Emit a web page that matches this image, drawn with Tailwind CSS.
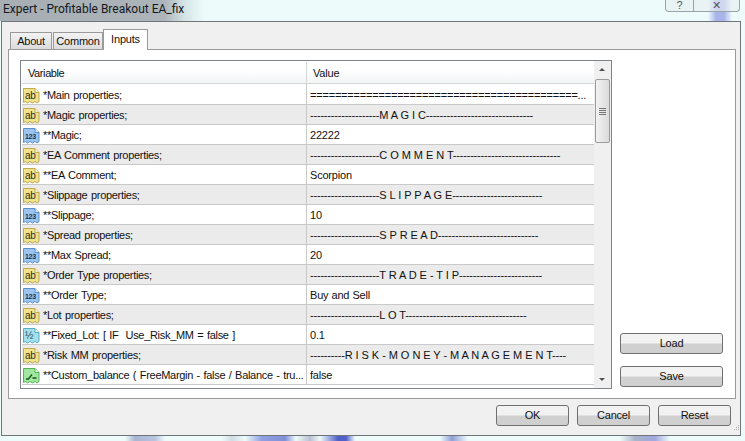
<!DOCTYPE html>
<html lang="en">
<head>
    <meta charset="UTF-8">
    <title>Expert - Profitable Breakout EA_fix</title>
    <script src="https://cdn.jsdelivr.net/npm/@tailwindcss/browser@4"></script>
</head>
<body class="relative w-[745px] h-[441px] overflow-hidden font-['Liberation_Sans',sans-serif] text-[11px] tracking-[-0.2px] text-[#111] bg-[linear-gradient(90deg,#eefbfb_0,#eefbfb_125px,#a8b4d0_135px,#b8c4e0_155px,#eefbfb_165px,#eefbfb_222px,#d0dce4_232px,#eefbfb_245px,#8f9fe0_262px,#8090d8_285px,#eefbfb_296px,#b8c0d0_310px,#eefbfb_320px,#5060c8_338px,#5060c8_346px,#eefbfb_355px,#eefbfb_440px,#8f9fd8_452px,#eefbfb_468px,#eefbfb_620px,#a8b4c8_635px,#a0a8e0_655px,#eefbfb_670px,#eefbfb_100%)]">
    <svg class="hidden">
        <symbol id="ab" viewBox="0 0 17 17">
            <path d="M0.5 1.5H12L16 5.5V14.5L14 16L12 14.5L9.5 16L7 14.5L4.5 16L2.5 14.5L0.5 15.5Z" fill="#f1e38c" stroke="#bda94e"/>
            <path d="M12 1.5V5.5H16" fill="#fff9d2" stroke="#bda94e"/>
            <text x="2" y="12" font-size="10" font-family="Liberation Sans" fill="#2b2a1c">ab</text>
        </symbol>
        <symbol id="num" viewBox="0 0 17 17">
            <path d="M0.5 1.5H12L16 5.5V14.5L14 16L12 14.5L9.5 16L7 14.5L4.5 16L2.5 14.5L0.5 15.5Z" fill="#9cc4ee" stroke="#5a8fc6"/>
            <path d="M12 1.5V5.5H16" fill="#e2f0fc" stroke="#5a8fc6"/>
            <text x="2" y="12" font-size="7" font-weight="700" font-family="Liberation Sans" fill="#12355e">123</text>
        </symbol>
        <symbol id="frac" viewBox="0 0 17 17">
            <path d="M0.5 1.5H12L16 5.5V14.5L14 16L12 14.5L9.5 16L7 14.5L4.5 16L2.5 14.5L0.5 15.5Z" fill="#a2e0ee" stroke="#58aebf"/>
            <path d="M12 1.5V5.5H16" fill="#e0f8fc" stroke="#58aebf"/>
            <text x="2" y="12" font-size="10" font-family="Liberation Sans" fill="#1c4f5c">½</text>
        </symbol>
        <symbol id="bool" viewBox="0 0 17 17">
            <path d="M0.5 1.5H12L16 5.5V14.5L14 16L12 14.5L9.5 16L7 14.5L4.5 16L2.5 14.5L0.5 15.5Z" fill="#a0e8a0" stroke="#56b152"/>
            <path d="M12 1.5V5.5H16" fill="#e2fbe0" stroke="#56b152"/>
            <path d="M3 12H5.5L9 7.5M9.5 11H13.5" fill="none" stroke="#14551a" stroke-width="1.3"/>
        </symbol>
    </svg>

    <div class="relative h-[21px] bg-[linear-gradient(90deg,#a6adb3_0,#aeb5ba_165px,#d5e6e8_185px,#eefbfb_205px,#eefbfb_708px,#a8b4e8_716px,#a8b4e8_724px,#eefbfb_732px,#eefbfb_100%)]">
        <div class="pl-[3px] pt-[1px] font-['Roboto',sans-serif] text-[12px] tracking-normal leading-[16px] text-[#14181c]">Expert - Profitable Breakout EA_fix</div>
        <div class="absolute right-[5px] top-0 flex h-[12px] w-[75px] rounded-b-[4px] border border-t-0 border-[#9aa3a8] bg-[#e8eef0]/60">
            <div class="flex w-[28px] items-end justify-center border-r border-[#9aa3a8] text-[11px] leading-[11px] text-[#555]">?</div>
            <div class="flex flex-1 items-end justify-center text-[11px] leading-[11px] text-[#555]">✕</div>
        </div>
    </div>

    <div class="ml-[1px] mr-[4px] h-[415px] border border-[#70757a] bg-[#f0f0f0] px-[6px] pt-[7px]">
        <div class="flex h-[20px] items-end pl-[2px]">
            <div class="flex h-[17px] w-[42px] items-center justify-center border border-b-0 border-[#9a9a9a] bg-[linear-gradient(#f3f3f3,#dcdcdc)]">About</div>
            <div class="ml-[1px] flex h-[17px] w-[50px] items-center justify-center border border-b-0 border-[#9a9a9a] bg-[linear-gradient(#f3f3f3,#dcdcdc)]">Common</div>
            <div class="relative z-10 -mb-[1px] flex h-[21px] w-[45px] items-center justify-center border border-b-0 border-[#9a9a9a] bg-white pb-[2px]">Inputs</div>
        </div>

        <div class="flex h-[350px] w-[728px] border border-[#9a9a9a] bg-white pl-[11px] pt-[10px]">
            <div class="flex h-[329px] w-[592px] shrink-0 border border-[#7f8488] bg-white">
                <div class="w-[573px] pl-[1px]">
                    <div class="flex h-[23px] border-b border-[#d5d5d5] bg-[linear-gradient(#ffffff_40%,#f3f5f6)] pt-[1px]">
                        <div class="w-[285px] shrink-0 border-r border-[#d5d5d5] pl-[6px] leading-[22px] tracking-[-0.4px]">Variable</div>
                        <div class="pl-[6px] leading-[22px]">Value</div>
                    </div>
                    <div id="rows"></div>
                </div>
                <div class="relative w-[17px] bg-[#f0f0f0]">
                    <div class="absolute left-[5px] top-[7px] size-0 border-x-[3px] border-b-[3px] border-x-transparent border-b-[#505050]"></div>
                    <div class="absolute left-[1px] top-[18px] flex h-[64px] w-[15px] flex-col items-center justify-center gap-[1px] rounded-[2px] border border-[#9a9a9a] bg-[linear-gradient(90deg,#f2f2f2,#dadada)]">
                        <div class="h-px w-[7px] bg-[#777]"></div>
                        <div class="h-px w-[7px] bg-[#777]"></div>
                        <div class="h-px w-[7px] bg-[#777]"></div>
                        <div class="h-px w-[7px] bg-[#777]"></div>
                    </div>
                    <div class="absolute bottom-[7px] left-[5px] size-0 border-x-[3px] border-t-[3px] border-x-transparent border-t-[#505050]"></div>
                </div>
            </div>
            <div class="ml-[8px] flex h-[327px] flex-col justify-end gap-[12px]">
                <button class="h-[21px] w-[103px] rounded-[3px] border border-[#707070] bg-[linear-gradient(#f2f2f2_45%,#d0d0d0_55%)]">Load</button>
                <button class="h-[21px] w-[103px] rounded-[3px] border border-[#707070] bg-[linear-gradient(#f2f2f2_45%,#d0d0d0_55%)]">Save</button>
            </div>
        </div>

        <div class="flex justify-end gap-[8px] pt-[6px] pr-[3px]">
            <button class="h-[21px] w-[73px] rounded-[3px] border border-[#707070] bg-[linear-gradient(#f2f2f2_45%,#d0d0d0_55%)]">OK</button>
            <button class="h-[21px] w-[73px] rounded-[3px] border border-[#707070] bg-[linear-gradient(#f2f2f2_45%,#d0d0d0_55%)]">Cancel</button>
            <button class="h-[21px] w-[73px] rounded-[3px] border border-[#707070] bg-[linear-gradient(#f2f2f2_45%,#d0d0d0_55%)]">Reset</button>
        </div>
    </div>

    <svg class="absolute left-[732px] top-[425px] size-[8px]" viewBox="0 0 8 8" fill="#a8a8a8">
        <rect x="6" y="0" width="1" height="1"/><rect x="4" y="2" width="1" height="1"/><rect x="6" y="2" width="1" height="1"/>
        <rect x="2" y="4" width="1" height="1"/><rect x="4" y="4" width="1" height="1"/><rect x="6" y="4" width="1" height="1"/>
    </svg>

    <script>
        const dash = (n) => '-'.repeat(n);
        const rows = [
            ['ab', '*Main properties;', '='.repeat(43) + '...'],
            ['ab', '*Magic properties;', dash(20) + 'M A G I C' + dash(31)],
            ['num', '**Magic;', '22222'],
            ['ab', '*EA Comment properties;', dash(20) + 'C O M M E N T' + dash(31)],
            ['ab', '**EA Comment;', 'Scorpion'],
            ['ab', '*Slippage properties;', dash(20) + 'S L I P P A G E' + dash(26)],
            ['num', '**Slippage;', '10'],
            ['ab', '*Spread properties;', dash(20) + 'S P R E A D' + dash(29)],
            ['num', '**Max Spread;', '20'],
            ['ab', '*Order Type properties;', dash(20) + 'T R A D E - T I P' + dash(24)],
            ['num', '**Order Type;', 'Buy and Sell'],
            ['ab', '*Lot properties;', dash(20) + 'L O T' + dash(35)],
            ['frac', '**Fixed_Lot: [ IF\u00a0 Use_Risk_MM = false ]', '0.1'],
            ['ab', '*Risk MM properties;', dash(10) + 'R I S K - M O N E Y - M A N A G E M E N T' + dash(4)],
            ['bool', '**Custom_balance ( FreeMargin - false / Balance - tru...', 'false'],
        ];

        document.getElementById('rows').innerHTML = rows.map(([icon, name, value], i) => `
            <div class="flex ${i === 0 ? 'h-[21px]' : 'h-[20px]'} border-b border-[#c9c9c9] ${i % 2 ? 'bg-[#ebebeb]' : 'bg-white'}">
                <div class="flex w-[285px] shrink-0 items-center gap-[3px] whitespace-nowrap border-r border-[#c9c9c9] pl-[1px] pt-[2px] tracking-[-0.3px] [word-spacing:0.8px]">
                    <svg class="size-[17px] shrink-0"><use href="#${icon}"/></svg><span>${name}</span>
                </div>
                <div class="flex items-center whitespace-nowrap pl-[3px] pt-[2px] [word-spacing:0.3px]">${value}</div>
            </div>`).join('');
    </script>
</body>
</html>
